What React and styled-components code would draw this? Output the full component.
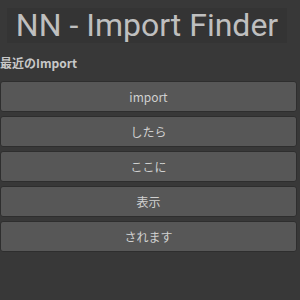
import React from "react";
import styled, { createGlobalStyle } from "styled-components";

const GlobalStyle = createGlobalStyle`
  html, body {
    margin: 0;
    padding: 0;
    background: #383838;
  }
  body {
    width: 300px;
    height: 300px;
    overflow: hidden;
    font-family: "Noto Sans", "Noto Sans CJK JP", sans-serif;
  }
`;

const items = ["import", "したら", "ここに", "表示", "されます"];

const App = () => {
  return (
    <Window>
      <GlobalStyle />
      <TitleBox>NN - Import Finder</TitleBox>
      <Label>最近のImport</Label>
      <List>
        {items.map((item) => (
          <ItemButton key={item}>{item}</ItemButton>
        ))}
      </List>
    </Window>
  );
};

const Window = styled.div`
  width: 300px;
  height: 300px;
  background: #383838;
  display: flex;
  flex-direction: column;
`;

const TitleBox = styled.div`
  margin: 8px 13px 0 7px;
  height: 35px;
  background: #343434;
  color: #bfbfbf;
  font-family: "Roboto", "Noto Sans", sans-serif;
  font-size: 32px;
  line-height: 35px;
  text-align: center;
  white-space: nowrap;
`;

const Label = styled.div`
  margin-top: 11px;
  height: 18px;
  color: #c8c8c8;
  font-size: 12px;
  font-weight: bold;
  line-height: 18px;
  font-family: "Noto Sans CJK JP", sans-serif;
`;

const List = styled.div`
  margin-top: 9px;
  padding: 0 3px 0 0;
  display: flex;
  flex-direction: column;
  gap: 4px;
`;

const ItemButton = styled.div`
  height: 29px;
  background: #575757;
  border: 1px solid #2e2e2e;
  border-radius: 3px;
  color: #d0d0d0;
  font-size: 12px;
  font-family: "Noto Sans CJK JP", sans-serif;
  display: flex;
  align-items: center;
  justify-content: center;
`;

export default App;
